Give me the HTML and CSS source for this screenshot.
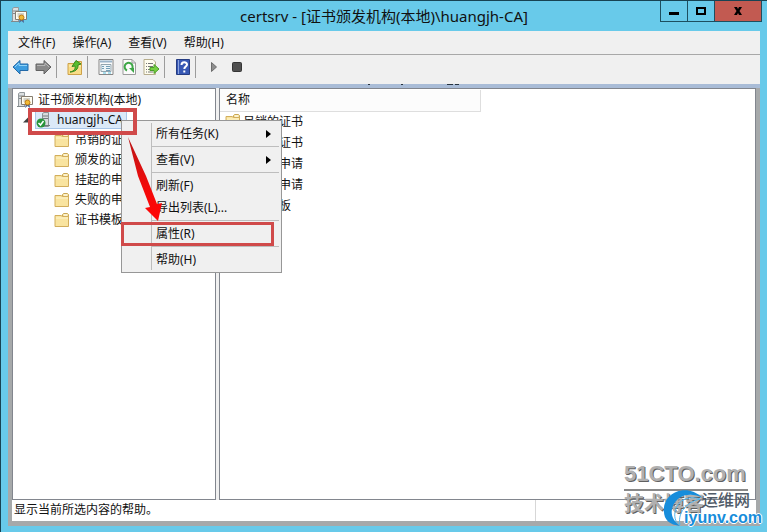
FILE: index.html
```
<!DOCTYPE html>
<html lang="zh-CN">
<head>
    <meta charset="UTF-8">
    <meta name="viewport" content="width=device-width, initial-scale=1.0">
    <title>certsrv - [证书颁发机构(本地)\huangjh-CA]</title>
    <link rel="stylesheet" href="styles.css">
</head>
<body>

    <!-- shared icons -->
    <svg class="defs" width="0" height="0" aria-hidden="true">
        <symbol id="folder" viewBox="0 0 16 14">
            <path d="M8.500 3.500V1.500L9.500.5H13.500L14.500 1.500V4" fill="#f6e3a0" stroke="#c9a653"/>
            <path d="M1 2.500H7L8.500 3.500H14.500V13.500H1Z" fill="#f9e4a0" stroke="#d2ae5c"/>
            <path d="M2 5H14" stroke="#fdf5cf"/>
            <path d="M10 2H13" stroke="#fff"/>
        </symbol>
        <symbol id="authority" viewBox="0 0 16 16">
            <path d="M1.500 1.500L3 .5H7.500V14.500H1.500Z" fill="#dcdfe0" stroke="#92999c"/>
            <path d="M2 4H7M2 6.500H7M0 14.500H8" stroke="#82898c"/>
            <path d="M4.500 4.500H15.500V12.500H4.500Z" fill="#fffdf2" stroke="#867d70"/>
            <path d="M6.500 7H13M6.500 9H10" stroke="#a6a69e"/>
            <path d="M9 11L8 16L10.500 14L13 16L12.500 11Z" fill="#4c6796"/>
            <circle cx="10.500" cy="10.500" r="2.500" fill="#f1ba35" stroke="#bd7a13"/>
        </symbol>
    </svg>

    <header class="titlebar">
        <svg class="app-icon" width="16" height="16"><use href="#authority"/></svg>
        <h1>certsrv - [证书颁发机构(本地)\huangjh-CA]</h1>
        <div class="window-buttons">
            <button type="button" aria-label="最小化">
                <svg width="10" height="10"><path d="M0 6H10V9H0Z"/></svg>
            </button>
            <button type="button" aria-label="最大化">
                <svg width="10" height="10"><path d="M1 2H9V8H1Z" fill="none" stroke="#000" stroke-width="2"/></svg>
            </button>
            <button type="button" class="close" aria-label="关闭">
                <svg width="10" height="10"><path d="M1 1H4L5 3L6 1H9L6.500 5L9 9H6L5 7L4 9H1L3.500 5Z"/></svg>
            </button>
        </div>
    </header>

    <div class="window">
        <nav class="menubar">
            <button type="button">文件(F)</button>
            <button type="button">操作(A)</button>
            <button type="button">查看(V)</button>
            <button type="button">帮助(H)</button>
        </nav>

        <div class="toolbar">
            <button type="button" aria-label="后退">
                <svg width="17" height="16"><path d="M1 8L8 1.500V5H16V11.500H8V15Z" fill="#3c9de0" stroke="#2269a8"/><path d="M3 8L7 4V6.500H15" fill="none" stroke="#8fd3f8"/></svg>
            </button>
            <button type="button" aria-label="前进">
                <svg width="17" height="16"><path d="M16 8L9 1.500V5H1V11.500H9V15Z" fill="#898989" stroke="#626262"/><path d="M2 6.500H10V4L14 8" fill="none" stroke="#b5b5b5"/></svg>
            </button>
            <span class="divider"></span>
            <button type="button" aria-label="向上">
                <svg width="16" height="16"><path d="M1 4.500H7L9 2.500H14.500V15.500H1Z" fill="#f8dc87" stroke="#cda149"/><path d="M2 7H14" stroke="#fdf0ba"/><path d="M3 13C8 12 8.500 9 8 7L5 7.500L9 1.500L14 5L11 6C11.500 10 8 13 3 13Z" fill="#58bd2e" stroke="#36891b"/></svg>
            </button>
            <span class="divider"></span>
            <button type="button" aria-label="属性">
                <svg width="16" height="16"><path d="M1 .5H15V15.500H1Z" fill="#fbfbfb" stroke="#868686"/><path d="M2 2.500H14" stroke="#9bb4c9" stroke-width="2"/><path d="M3 5.500H13V12.500H3Z" fill="#edf5f8" stroke="#93a5af"/><path d="M4 7.500H6M4 9.500H6M8 7.500H12M8 9.500H12M8 11.500H12" stroke="#749fb7"/><path d="M5 14H8M10 14H13" stroke="#59bfdd"/></svg>
            </button>
            <button type="button" aria-label="刷新">
                <svg width="14" height="16"><path d="M1 .5H10L13.500 4V15.500H1Z" fill="#fbfbfb" stroke="#9b9b9b"/><path d="M10 .5V4H13.500" fill="none" stroke="#9b9b9b"/><path d="M5 11.500A4 4 0 1 1 10 10" fill="none" stroke="#3da746" stroke-width="2"/><path d="M7 9H12V14Z" fill="#3da746"/></svg>
            </button>
            <button type="button" aria-label="导出列表">
                <svg width="17" height="16"><path d="M1 .5H10L12.500 3V15.500H1Z" fill="#fffdef" stroke="#b6ad8c"/><path d="M3 4.500H4M5 4.500H10M3 7.500H4M5 7.500H10M3 10.500H4M5 10.500H8M3 13H4M5 13H10" stroke="#777"/><path d="M7 8.500H11V5.500L16 10L11 14.500V11.500H7Z" fill="#77cf43" stroke="#4b9f29"/></svg>
            </button>
            <span class="divider"></span>
            <button type="button" class="help" aria-label="帮助">
                <svg width="14" height="16"><path d="M.5.500H13.500V15.500H.5Z" fill="#3758b4" stroke="#263c82"/><path d="M2.500 1V15" stroke="#8ea5df"/><path d="M5.500 6C5.500 2.500 11 2.500 11 5.500C11 7.500 8.300 7.500 8.300 10" fill="none" stroke="#fff" stroke-width="2"/><path d="M7.300 11.500H9.300V13.500H7.300Z" fill="#fff"/></svg>
            </button>
            <span class="divider"></span>
            <button type="button" aria-label="启动">
                <svg width="8" height="12"><path d="M1.500 1.500L6.500 6L1.500 10.500Z" fill="#8e8e8e" stroke="#6d6d6d"/></svg>
            </button>
            <button type="button" aria-label="停止">
                <svg width="10" height="10"><rect x=".5" y=".5" width="9" height="9" rx="1" fill="#505050" stroke="#353535"/></svg>
            </button>
        </div>

        <main class="workspace">
            <svg class="clipped-caption" width="94" height="2" aria-hidden="true"><path d="M1 0H3M34 0H36M80 0H86M88 0H92" stroke="#263340" stroke-width="2"/></svg>
            <div class="panes">
                <ul class="tree">
                    <li>
                        <div class="node root"><svg width="16" height="16"><use href="#authority"/></svg><span>证书颁发机构(本地)</span></div>
                        <ul>
                            <li>
                                <div class="node ca">
                                    <svg class="expander" width="6" height="6"><path d="M5.500 0V5.500H0Z" fill="#404040"/></svg>
                                    <div class="selected">
                                        <svg width="16" height="16"><path d="M6.500 1.500L8 .5H12.500V14.500H6.500Z" fill="#d8dbdd" stroke="#8b9194"/><path d="M7 4H12M7 6.500H12M7 13.500H14" stroke="#747b80"/><circle cx="5" cy="11" r="4.500" fill="#27943a"/><path d="M2.500 11L4.500 13L7.500 9" fill="none" stroke="#fff" stroke-width="1.500"/></svg>
                                        <span>huangjh-CA</span>
                                    </div>
                                </div>
                                <ul class="children">
                                    <li class="node"><svg width="16" height="14"><use href="#folder"/></svg><span>吊销的证书</span></li>
                                    <li class="node"><svg width="16" height="14"><use href="#folder"/></svg><span>颁发的证书</span></li>
                                    <li class="node"><svg width="16" height="14"><use href="#folder"/></svg><span>挂起的申请</span></li>
                                    <li class="node"><svg width="16" height="14"><use href="#folder"/></svg><span>失败的申请</span></li>
                                    <li class="node"><svg width="16" height="14"><use href="#folder"/></svg><span>证书模板</span></li>
                                </ul>
                            </li>
                        </ul>
                    </li>
                </ul>

                <div class="list">
                    <table>
                        <thead>
                            <tr><th>名称</th></tr>
                        </thead>
                        <tbody>
                            <tr><td><svg width="16" height="14"><use href="#folder"/></svg>吊销的证书</td></tr>
                            <tr><td><svg width="16" height="14"><use href="#folder"/></svg>颁发的证书</td></tr>
                            <tr><td><svg width="16" height="14"><use href="#folder"/></svg>挂起的申请</td></tr>
                            <tr><td><svg width="16" height="14"><use href="#folder"/></svg>失败的申请</td></tr>
                            <tr><td><svg width="16" height="14"><use href="#folder"/></svg>证书模板</td></tr>
                        </tbody>
                    </table>
                </div>
            </div>
            <footer class="statusbar">
                <span>显示当前所选内容的帮助。</span>
                <span></span>
            </footer>
        </main>
    </div>

    <div class="context-menu">
        <button type="button">所有任务(K)<svg width="5" height="8"><path d="M0 0L5 4L0 8Z"/></svg></button>
        <hr>
        <button type="button">查看(V)<svg width="5" height="8"><path d="M0 0L5 4L0 8Z"/></svg></button>
        <hr>
        <button type="button">刷新(F)</button>
        <button type="button">导出列表(L)...</button>
        <hr>
        <button type="button">属性(R)</button>
        <hr>
        <button type="button">帮助(H)</button>
    </div>

    <!-- step markers -->
    <div class="mark mark-node"></div>
    <div class="mark mark-item"></div>
    <svg class="mark-arrow" width="40" height="90" aria-hidden="true">
        <defs>
            <linearGradient id="arrow-fill" x1="0" y1="0" x2="0" y2="1">
                <stop offset="0" stop-color="#b81818"/>
                <stop offset=".6" stop-color="#f30a0a"/>
                <stop offset="1" stop-color="#ff0505"/>
            </linearGradient>
        </defs>
        <path d="M4 3L22 42L33 70L38 69L34 87L21 74L26 73L14 42Z" fill="url(#arrow-fill)"/>
    </svg>

    <div class="watermark">
        <strong>51CTO.com</strong>
        <span>技术博客</span>
    </div>
    <div class="watermark-site">
        <svg width="44" height="40" viewBox="0 0 44 40" aria-hidden="true">
            <path d="M41 10C24-6 2 5 2 21C1 31 7 37 18 38C10 32 8 25 11 18C15 8 27 3 41 10Z" fill="#178ddb"/>
            <path d="M38 11C25 7 15 13 13 24C12 30 14 35 18 37C16 28 20 16 38 11Z" fill="none" stroke="#55b6ee"/>
        </svg>
        <div>
            <span>运维网</span>
            <b>iyunv.com</b>
        </div>
    </div>

</body>
</html>
```
FILE: styles.css
```
* {
    box-sizing: border-box;
}
body {
    margin: 0;
    height: 100vh;
    display: flex;
    flex-direction: column;
    position: relative;
    overflow: hidden;
    padding: 0 7px 6px;
    border-top: 1px solid #174353;
    border-left: 1px solid #174353;
    background: #68caea;
    color: #111;
    font-family: "Noto Sans", "Noto Sans CJK SC", sans-serif;
    font-size: 12px;
    line-height: 20px;
}
button {
    margin: 0;
    padding: 0;
    border: none;
    background: none;
    color: inherit;
    font: inherit;
}
svg {
    display: block;
    flex: none;
}
ul {
    list-style: none;
    margin: 0;
    padding: 0;
}
.defs {
    position: absolute;
}

/* title bar */
.titlebar {
    position: relative;
    height: 30px;
    flex: none;
    display: flex;
    align-items: center;
    justify-content: center;
}
.titlebar h1 {
    margin: 0;
    font-size: 15px;
    font-weight: normal;
}
.app-icon {
    position: absolute;
    left: 3px;
    top: 6px;
}
.window-buttons {
    position: absolute;
    top: -1px;
    right: -2px;
    display: flex;
    border: 1px solid #1d4f60;
}
.window-buttons button {
    width: 27px;
    height: 20px;
    display: flex;
    align-items: center;
    justify-content: center;
    border-right: 1px solid #1d4f60;
}
.window-buttons .close {
    width: 46px;
    border-right: none;
    background: #c25a51;
}

/* menu and toolbar */
.window {
    flex: 1;
    min-height: 0;
    display: flex;
    flex-direction: column;
    background: #f0f0f0;
}
.menubar {
    height: 24px;
    flex: none;
    display: flex;
    align-items: center;
    gap: 1px;
    padding: 0 2px;
    border-bottom: 1px solid #a8a8a8;
}
.menubar button {
    padding: 0 8px;
}
.toolbar {
    height: 29px;
    flex: none;
    display: flex;
    align-items: center;
    padding: 0 1px 5px;
}
.toolbar button {
    width: 23px;
    height: 22px;
    display: flex;
    align-items: center;
    justify-content: center;
}
.divider {
    width: 1px;
    height: 22px;
    margin: 0 6px 0 1px;
    background: #9c9c9c;
}

/* panes */
.workspace {
    position: relative;
    flex: 1;
    min-height: 0;
    display: flex;
    flex-direction: column;
    padding: 0 4px 5px;
    border-top: 4px solid #a9bcd7;
    background: #a6a9aa;
}
.clipped-caption {
    position: absolute;
    left: 359px;
    top: -4px;
}
.panes {
    flex: 1;
    min-height: 0;
    display: grid;
    grid-template-columns: 204px 1fr;
    gap: 3px;
    background: #f0f0f0;
}
.tree,
.list {
    border: 1px solid #82868e;
    background: #fff;
    overflow: hidden;
}
.tree {
    padding-top: 1px;
    white-space: nowrap;
}
.node {
    height: 20px;
    display: flex;
    align-items: center;
    gap: 5px;
}
.root {
    padding-left: 4px;
}
.ca {
    padding-left: 10px;
}
.expander {
    margin-right: 1px;
}
.selected {
    height: 18px;
    display: flex;
    align-items: center;
    gap: 5px;
    padding: 0 3px 0 0;
    border: 1px solid #a9c6e8;
    background: #dbe9f8;
}
.children {
    padding-left: 41px;
}
.list table {
    width: 261px;
    border-collapse: collapse;
    margin-top: 1px;
}
.list th {
    height: 21px;
    padding: 0 6px;
    border-right: 1px solid #dedede;
    border-bottom: 1px solid #dedede;
    background: #fcfcfc;
    font-weight: normal;
    text-align: left;
}
.list td {
    height: 21px;
    padding: 0 5px;
}
.list td svg {
    display: inline-block;
    margin-right: 2px;
    vertical-align: -2px;
}
.statusbar {
    height: 21px;
    flex: none;
    display: flex;
    background: #fff;
}
.statusbar span:first-child {
    flex: 1;
    padding-left: 2px;
    border-right: 1px solid #d7d7d7;
}
.statusbar span:last-child {
    width: 220px;
}

/* context menu */
.context-menu {
    position: absolute;
    left: 120px;
    top: 119px;
    width: 161px;
    padding: 1px 2px 2px 29px;
    border: 1px solid #979797;
    background: #f0f0f0;
}
.context-menu::before {
    content: "";
    position: absolute;
    left: 29px;
    top: 2px;
    bottom: 2px;
    width: 1px;
    background: #bdbdbd;
}
.context-menu button {
    width: 100%;
    height: 22px;
    display: flex;
    align-items: center;
    justify-content: space-between;
    padding: 2px 8px 0 5px;
    text-align: left;
}
.context-menu hr {
    height: 1px;
    margin: 2px 0 1px 1px;
    border: none;
    background: #bdbdbd;
}

/* step markers */
.mark {
    position: absolute;
    border: 3px solid #d04a4a;
}
.mark-node {
    left: 27px;
    top: 107px;
    width: 109px;
    height: 27px;
    border-width: 4px;
}
.mark-item {
    left: 120px;
    top: 221px;
    width: 153px;
    height: 24px;
}
.mark-arrow {
    position: absolute;
    left: 123px;
    top: 133px;
}

/* watermarks */
.watermark {
    position: absolute;
    right: 19px;
    bottom: 15px;
    width: 124px;
    color: #b0b0b0;
    font-weight: bold;
    text-shadow: 1px 1px 0 #606060;
}
.watermark strong {
    display: block;
    border-bottom: 2px solid #888;
    font-family: "Liberation Sans", sans-serif;
    font-size: 22px;
    line-height: 30px;
}
.watermark span {
    display: block;
    font-size: 20px;
    line-height: 26px;
}
.watermark-site {
    position: absolute;
    right: 5px;
    bottom: 4px;
    display: flex;
}
.watermark-site div {
    margin-left: -22px;
    padding-top: 4px;
}
.watermark-site span,
.watermark-site b {
    display: block;
    line-height: 17px;
}
.watermark-site span {
    padding-left: 18px;
    color: #505b68;
    font-size: 16px;
    font-weight: 500;
}
.watermark-site b {
    color: #178ddb;
    font-family: "Liberation Sans", sans-serif;
    font-size: 16px;
    text-shadow: 1px 0 #fff, -1px 0 #fff, 0 1px #fff, 0 -1px #fff;
}
```
